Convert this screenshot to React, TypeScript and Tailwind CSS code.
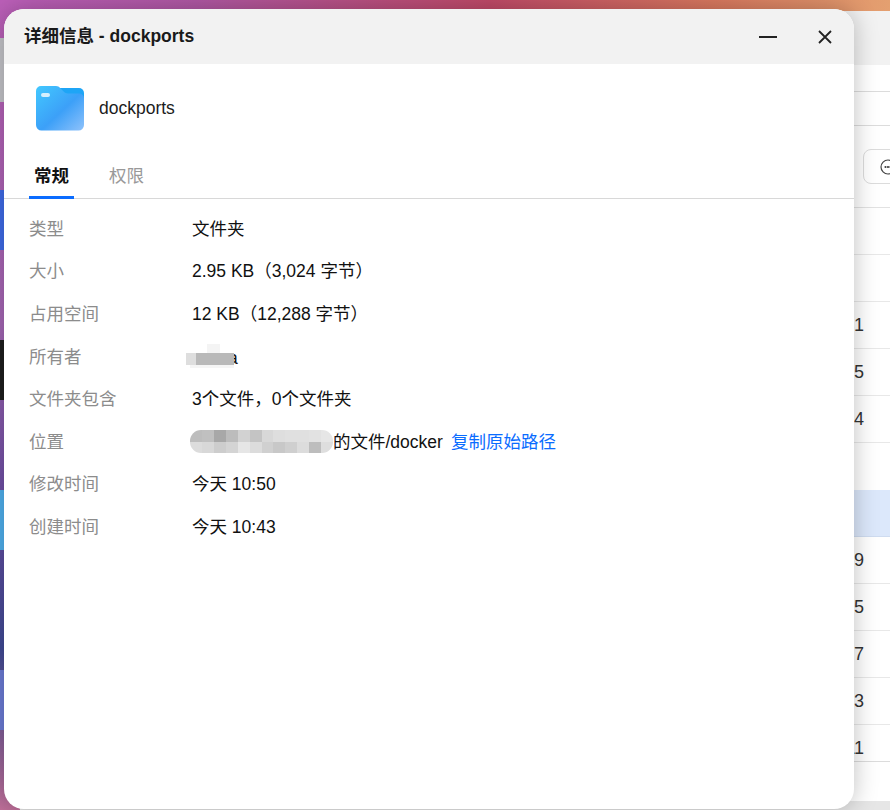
const rows: { label: string; value?: string }[] = [
  { label: "类型", value: "文件夹" },
  { label: "大小", value: "2.95 KB（3,024 字节）" },
  { label: "占用空间", value: "12 KB（12,288 字节）" },
  { label: "所有者" },
  { label: "文件夹包含", value: "3个文件，0个文件夹" },
  { label: "位置" },
  { label: "修改时间", value: "今天 10:50" },
  { label: "创建时间", value: "今天 10:43" },
];

const pathTiles = [
  "bg-[#bdbdbd]", "bg-[#c0c0c0]", "bg-[#a8a8a8]", "bg-[#bcbcbc]", "bg-[#d2d2d2]", "bg-[#c4c4c4]",
  "bg-[#d8d8d8]", "bg-[#dedede]", "bg-[#e0e0e0]", "bg-[#e0e0e0]", "bg-[#e2e2e2]", "bg-[#e6e6e6]",
  "bg-[#dcdcdc]", "bg-[#d8d8d8]", "bg-[#cdcdcd]", "bg-[#d4d4d4]", "bg-[#e6e6e6]", "bg-[#dcdcdc]",
  "bg-[#d0d0d0]", "bg-[#c8c8c8]", "bg-[#cfcfcf]", "bg-[#dcdcdc]", "bg-[#bdbdbd]", "bg-[#dedede]",
];

const backRows = [
  { text: "", cls: "h-[47px] border-b border-[#e8e8e8]" },
  { text: "", cls: "h-[47px] border-b border-[#e8e8e8]" },
  { text: "09:41", cls: "h-[47px] border-b border-[#e8e8e8]" },
  { text: "09:35", cls: "h-[47px] border-b border-[#e8e8e8]" },
  { text: "09:14", cls: "h-[47px] border-b border-[#e8e8e8]" },
  { text: "", cls: "h-[47px]" },
  { text: "", cls: "h-[47px] bg-[#dce8fb] border-b border-[#cfdcf0]" },
  { text: "10:49", cls: "h-[47px] border-b border-[#e8e8e8]" },
  { text: "10:15", cls: "h-[47px] border-b border-[#e8e8e8]" },
  { text: "09:57", cls: "h-[47px] border-b border-[#e8e8e8]" },
  { text: "09:23", cls: "h-[47px] border-b border-[#e8e8e8]" },
  { text: "09:11", cls: "h-[37px] border-b border-[#dcdcdc] pt-[10px]" },
];

function FolderIcon() {
  return (
    <svg width="48" height="45" viewBox="0 0 48 45" className="block">
      <defs>
        <linearGradient id="front" x1="0" y1="0" x2="1" y2="1">
          <stop offset="0" stopColor="#42c8ff" />
          <stop offset="0.55" stopColor="#3ca0f8" />
          <stop offset="1" stopColor="#8fc2fb" />
        </linearGradient>
      </defs>
      <path d="M14 2h29a5 5 0 0 1 5 5v10H14z" fill="#1ea5f6" />
      <path
        d="M5 0h15c2 0 3 .7 4.400 2.200l3.200 3.400c1.200 1.200 2.400 2 4.400 2H43a5 5 0 0 1 5 5V39a5.500 5.500 0 0 1-5.500 5.500H5.500A5.500 5.500 0 0 1 0 39V5a5 5 0 0 1 5-5z"
        fill="url(#front)"
      />
      <rect x="5" y="7" width="9" height="4" rx="2" fill="#d4effd" />
    </svg>
  );
}

function DesktopStrip() {
  return (
    <div className="flex h-[810px] w-[4px] flex-col">
      <div className="mt-[38px] h-[64px] bg-[#c3c3c8]" />
      <div className="mt-[88px] h-[60px] bg-[#3f6be8]" />
      <div className="mt-[90px] h-[60px] bg-[#1e1e1e]" />
      <div className="mt-[90px] h-[60px] bg-[#4fb0ee]" />
      <div className="mt-[120px] h-[60px] bg-[#6c7cd6]" />
    </div>
  );
}

function BackWindow() {
  return (
    <div className="absolute left-[20px] right-0 top-[11px] flex h-[799px] flex-col bg-white text-[18px] text-[#333]">
      <div className="h-[54px] shrink-0 bg-[#f2f2f2]" />
      <div className="h-[27px] shrink-0 border-b border-[#dcdcdc]" />
      <div className="h-[34px] shrink-0 border-b border-[#dcdcdc]" />
      <div className="flex h-[82px] shrink-0 items-center justify-start border-b border-[#e2e2e2] pl-[843px]">
        <div className="flex h-[35px] w-[60px] shrink-0 items-center rounded-l-[8px] border border-[#dcdcdc] pl-[16px]">
          <svg width="16" height="16" viewBox="0 0 16 16" fill="none" stroke="#444" strokeWidth="1.2">
            <circle cx="8" cy="8" r="7" />
            <circle cx="5.500" cy="8" r="0.500" fill="#444" />
            <circle cx="8" cy="8" r="0.500" fill="#444" />
            <circle cx="10.500" cy="8" r="0.500" fill="#444" />
          </svg>
        </div>
      </div>
      {backRows.map((row, i) => (
        <div key={i} className={`flex shrink-0 items-center justify-end pr-[26px] ${row.cls}`}>
          {row.text}
        </div>
      ))}
      <div className="h-[39px] shrink-0" />
      <div className="flex-1 bg-[#e6e6e6]" />
    </div>
  );
}

export default function App() {
  return (
    <div
      className="relative h-[810px] w-[890px] overflow-hidden bg-[linear-gradient(90deg,#bb5fb8_0%,#b058a4_22%,#c04a68_55%,#d9785f_80%,#e4a070_100%)] text-black"
      style={{ fontFamily: '"Liberation Sans", "Noto Sans CJK SC", sans-serif' }}
    >
      <div className="absolute left-0 top-0 h-[810px] w-[30px] bg-[linear-gradient(180deg,#bb5fb8_0%,#a567b5_40%,#6f4fa5_60%,#3f4a95_80%,#c0709a_100%)]">
        <DesktopStrip />
      </div>
      <BackWindow />

      <div className="absolute left-[4px] top-[9px] flex h-[800px] w-[850px] flex-col overflow-hidden rounded-[20px] bg-white shadow-[0_0_24px_rgba(0,0,0,0.25)]">
        <header className="flex h-[55px] shrink-0 items-center bg-[#f2f2f2] pl-[20px]">
          <h1 className="text-[17.5px] font-bold text-[#1a1a1a]">详细信息 - dockports</h1>
          <div className="ml-auto flex items-center">
            <svg width="18" height="2" viewBox="0 0 18 2" className="block">
              <rect width="18" height="2" fill="#222" />
            </svg>
            <svg width="14" height="14" viewBox="0 0 14 14" className="ml-[41px] mr-[22px] block" stroke="#222" strokeWidth="1.800">
              <path d="M1 1l12 12M13 1L1 13" />
            </svg>
          </div>
        </header>

        <div className="flex h-[88px] shrink-0 items-center pl-[32px] pt-[1px]">
          <FolderIcon />
          <span className="mb-[1px] ml-[15px] text-[17.5px] text-[#1c1c1c]">dockports</span>
        </div>

        <div className="flex h-[47px] shrink-0 items-start border-b border-[#d8d8d8] pl-[25px]">
          <div className="flex h-[47px] w-[45px] justify-center border-b-[3px] border-[#0a6cff] pt-[12px] text-[17.5px] font-bold leading-[24px] text-[#111]">
            常规
          </div>
          <div className="ml-[35px] pt-[12px] text-[17.5px] leading-[24px] text-[#999]">权限</div>
        </div>

        <div className="pl-[25px] pt-[8.6px] text-[17.5px]">
          {rows.map((row) => (
            <div key={row.label} className="flex h-[42.6px] items-center">
              <div className="w-[163px] shrink-0 text-[#8c8c8c]">{row.label}</div>
              {row.value && <div className="text-[#111]">{row.value}</div>}
              {row.label === "所有者" && (
                <div className="relative h-[26px] w-[50px] text-[#111]">
                  <span className="absolute left-[36px] top-[1px]">a</span>
                  <div className="absolute left-[15px] top-0 h-[9px] w-[13px] bg-[#f4f4f4]" />
                  <div className="absolute left-[-6px] top-[9px] h-[12px] w-[10px] bg-[#dedede]" />
                  <div className="absolute left-[4px] top-[9px] h-[12px] w-[38px] bg-[#b9b9b9]" />
                  <div className="absolute left-[-2px] top-[21px] h-[3px] w-[44px] bg-[#f5f5f5]" />
                </div>
              )}
              {row.label === "位置" && (
                <>
                  <div className="ml-[-2px] grid h-[23px] w-[143px] grid-cols-12 grid-rows-2 overflow-hidden rounded-[11px]">
                    {pathTiles.map((tile, i) => (
                      <div key={i} className={tile} />
                    ))}
                  </div>
                  <span className="text-[#111]">的文件/docker</span>
                  <span className="ml-[8px] text-[#0a6cff]">复制原始路径</span>
                </>
              )}
            </div>
          ))}
        </div>
      </div>
    </div>
  );
}
